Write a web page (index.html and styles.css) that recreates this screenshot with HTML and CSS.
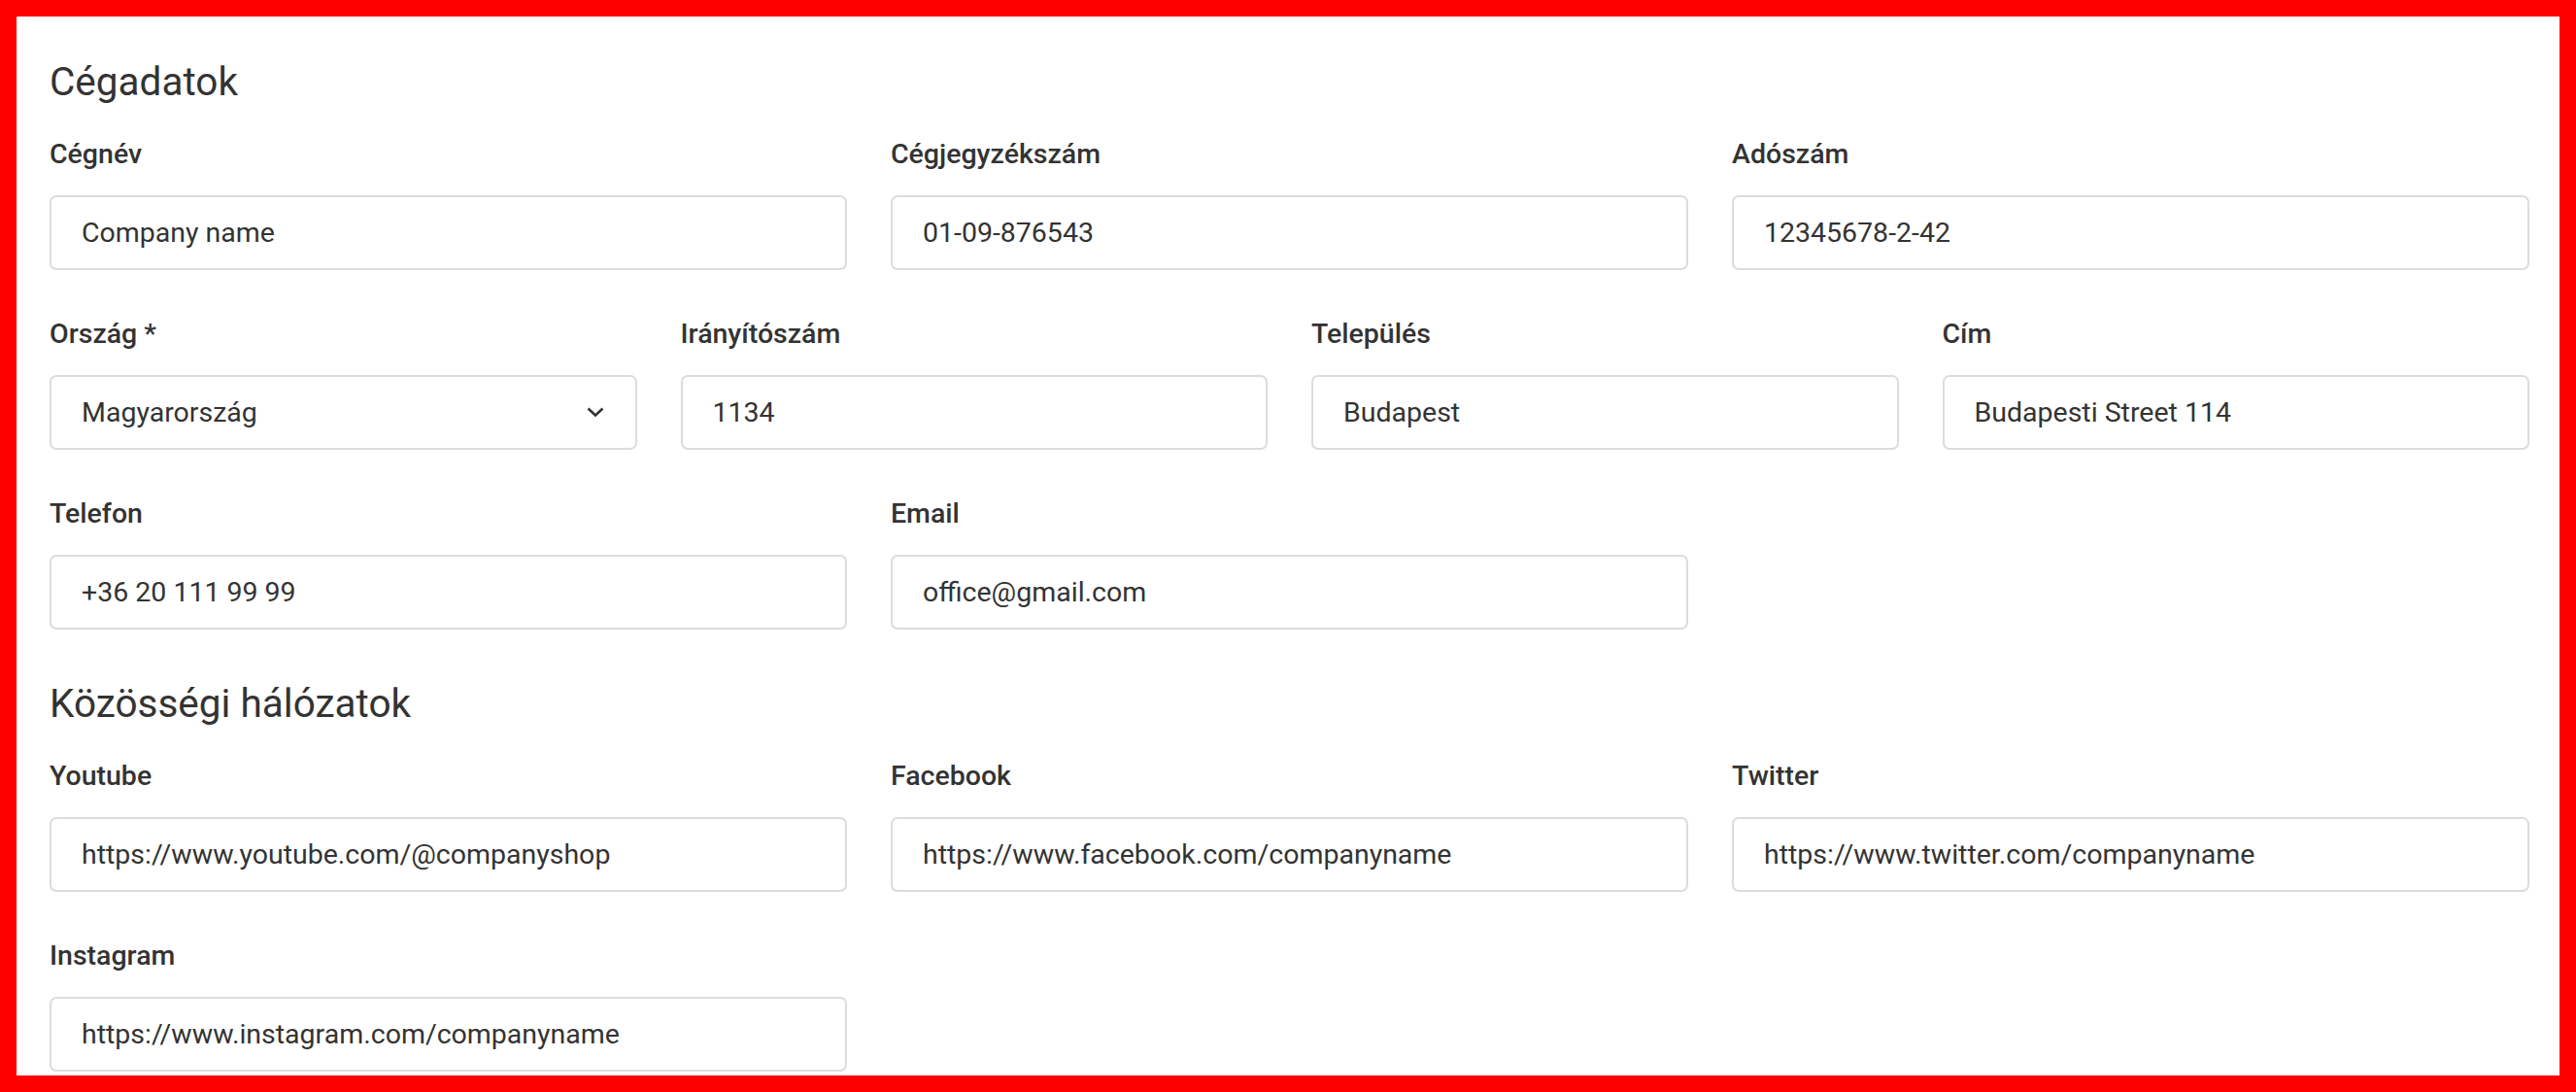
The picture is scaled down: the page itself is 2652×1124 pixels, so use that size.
FILE: index.html
```html
<!DOCTYPE html>
<html lang="hu">
<head>
    <meta charset="utf-8" />
    <title>Cégadatok</title>
    <link rel="stylesheet" href="styles.css">
</head>
<body>
    <form class="panel">
        <h2 class="section-title">Cégadatok</h2>

        <div class="form-row">
            <div class="field">
                <label for="companyName">Cégnév</label>
                <input type="text" id="companyName" value="Company name">
            </div>
            <div class="field">
                <label for="regNumber">Cégjegyzékszám</label>
                <input type="text" id="regNumber" value="01-09-876543">
            </div>
            <div class="field">
                <label for="taxNumber">Adószám</label>
                <input type="text" id="taxNumber" value="12345678-2-42">
            </div>
        </div>

        <div class="form-row cols-4">
            <div class="field">
                <label for="country">Ország *</label>
                <div class="select-wrap">
                    <select id="country">
                        <option>Magyarország</option>
                        <option>Ausztria</option>
                        <option>Szlovákia</option>
                    </select>
                    <svg class="chevron" width="18" height="10" viewBox="0 0 18 10">
                        <path d="M1.5 1.5 L9 8.5 L16.5 1.5" fill="none" stroke="#333" stroke-width="2.6" />
                    </svg>
                </div>
            </div>
            <div class="field">
                <label for="zip">Irányítószám</label>
                <input type="text" id="zip" value="1134">
            </div>
            <div class="field">
                <label for="city">Település</label>
                <input type="text" id="city" value="Budapest">
            </div>
            <div class="field">
                <label for="address">Cím</label>
                <input type="text" id="address" value="Budapesti Street 114">
            </div>
        </div>

        <div class="form-row">
            <div class="field">
                <label for="phone">Telefon</label>
                <input type="text" id="phone" value="+36 20 111 99 99">
            </div>
            <div class="field">
                <label for="email">Email</label>
                <input type="text" id="email" value="office@gmail.com">
            </div>
        </div>

        <h2 class="section-title spaced">Közösségi hálózatok</h2>

        <div class="form-row">
            <div class="field">
                <label for="youtube">Youtube</label>
                <input type="text" id="youtube" value="https://www.youtube.com/@companyshop">
            </div>
            <div class="field">
                <label for="facebook">Facebook</label>
                <input type="text" id="facebook" value="https://www.facebook.com/companyname">
            </div>
            <div class="field">
                <label for="twitter">Twitter</label>
                <input type="text" id="twitter" value="https://www.twitter.com/companyname">
            </div>
        </div>

        <div class="form-row">
            <div class="field">
                <label for="instagram">Instagram</label>
                <input type="text" id="instagram" value="https://www.instagram.com/companyname">
            </div>
        </div>
    </form>
</body>
</html>
```

FILE: styles.css
```css
html, body {
    margin: 0;
    padding: 0;
}

body {
    font-family: Roboto, "Liberation Sans", sans-serif;
    color: #333;
    background: #fff;
}

.panel {
    box-sizing: border-box;
    height: 1124px;
    padding: 43px 31px 0 34px;
    border: 17px solid #ff0000;
    overflow: hidden;
}

.section-title {
    margin: 0 0 31px;
    font-size: 40.5px;
    line-height: 48px;
    font-weight: 400;
}

/* collapses with the row margin above */
.section-title.spaced {
    margin-top: 52px;
}

.form-row {
    display: grid;
    grid-template-columns: repeat(3, 1fr);
    column-gap: 45px;
    margin-bottom: 46px;
}

.form-row.cols-4 {
    grid-template-columns: repeat(4, 1fr);
}

.form-row:last-child {
    margin-bottom: 0;
}

.field label {
    display: block;
    margin-bottom: 22px;
    font-size: 28.5px;
    line-height: 40px;
    font-weight: 500;
}

.field input,
.field select {
    display: block;
    box-sizing: border-box;
    width: 100%;
    height: 77px;
    margin: 0;
    padding: 0 31px;
    border: 2px solid #dcdcdc;
    border-radius: 7px;
    background: #fff;
    font-family: inherit;
    font-size: 28.5px;
    color: #333;
    outline: none;
}

.field select {
    appearance: none;
    -webkit-appearance: none;
    padding-right: 70px;
}

.select-wrap {
    position: relative;
}

.chevron {
    position: absolute;
    right: 34px;
    top: 33px;
    pointer-events: none;
}
```
